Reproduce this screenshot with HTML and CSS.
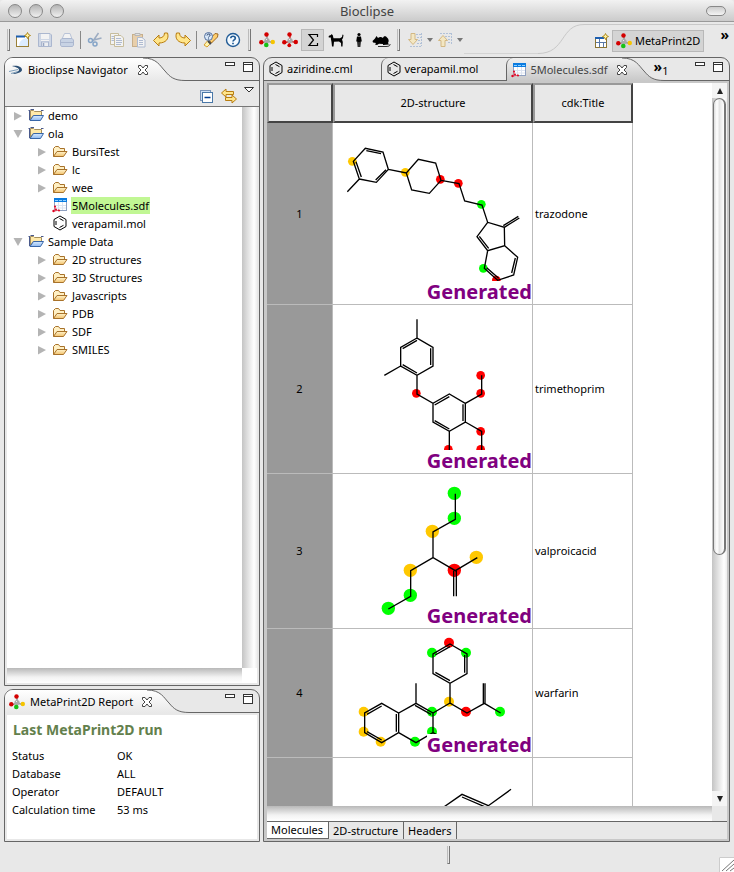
FILE: index.html
```html
<!DOCTYPE html>
<html lang="en">
<head>
<meta charset="utf-8">
<title>Bioclipse</title>
<link rel="stylesheet" href="styles.css">
</head>
<body>
<svg class="defs" aria-hidden="true">
  <defs>
    <linearGradient id="g-light" x1="0" y1="0" x2="0" y2="1"><stop offset="0" stop-color="#fff"/><stop offset="1" stop-color="#e8e8e8"/></linearGradient>
    <linearGradient id="g-dark" x1="0" y1="0" x2="0" y2="1"><stop offset="0" stop-color="#f0f0f0"/><stop offset="1" stop-color="#c8c8c8"/></linearGradient>
    <linearGradient id="g-folder" x1="0" y1="0" x2="0" y2="1"><stop offset="0" stop-color="#fff3cc"/><stop offset="1" stop-color="#f3c26c"/></linearGradient>
    <linearGradient id="g-blue" x1="0" y1="0" x2="0" y2="1"><stop offset="0" stop-color="#d8ebff"/><stop offset="1" stop-color="#8db8f0"/></linearGradient>
    <symbol id="folder" viewBox="0 0 16 16"><path d="M1.500 13.500V5.500L3.500 3.500H6.500L8 5.500H12.500V8" fill="#fff0c4" stroke="#a8722a"/><path d="M1.500 13.500L5 8.500H15L11.500 13.500Z" fill="url(#g-folder)" stroke="#a8722a"/></symbol>
    <symbol id="project" viewBox="0 0 16 16"><path d="M2.500 12.500V3.500H5.500L6.500 4.500H13.500V8.500H5Z" fill="#ffe9a8" stroke="#a58f5c"/><path d="M0.500 3.500H2M2.500 2.500H6M13 3.500H15.500M1.500 4V13" fill="none" stroke="#4a5a8c"/><path d="M2 13.500L5.500 8.500H15.500L12.500 13.500Z" fill="url(#g-blue)" stroke="#3866a8"/></symbol>
    <symbol id="ring" viewBox="0 0 16 16"><path d="M8 1L14 4.500V11.500L8 15L2 11.500V4.500Z M4 6V10M7.500 3.500L11.500 5.700M7.500 12.500L11.500 10.300" fill="none" stroke="#000"/></symbol>
    <symbol id="sdf" viewBox="0 0 16 16"><rect x="2.500" y="2.500" width="12" height="11" fill="#fff" stroke="#8fa0c0"/><path d="M2 1H15V5H2Z" fill="#0a7be0"/><path d="M3 3.500H14" stroke="#8fd0ff" stroke-dasharray="3 1"/><path d="M6.500 5V13M10.500 5V13M3 8.500H14M3 11H14" stroke="#dbe3f0" fill="none"/><path d="M3 9V13.500M1 14H3L7 13" stroke="#e86070" fill="none"/><circle cx="3" cy="9.500" r="1" fill="#e00020"/><circle cx="1.500" cy="14" r="1.200" fill="#e00020"/><circle cx="4" cy="12.500" r="1" fill="#e00020"/><circle cx="7" cy="13.500" r="1" fill="#e00020"/></symbol>
    <symbol id="mol" viewBox="0 0 16 16"><path d="M8 3V9L2.500 11M8 9L13.500 10.500M8 9L7 13" stroke="#999" stroke-width="1.600" fill="none"/><circle cx="7.500" cy="2.500" r="2.200" fill="#d40000"/><circle cx="2.300" cy="10.300" r="2.200" fill="#d40000"/><circle cx="8" cy="8.500" r="2.600" fill="#aaa"/><circle cx="7.300" cy="13" r="2.300" fill="#16c216"/><circle cx="13.800" cy="10" r="2.200" fill="#f5c400"/><path d="M7 8L8 7" stroke="#eee"/></symbol>
    <symbol id="mol-red" viewBox="0 0 16 16"><path d="M8 3V9L2.500 11M8 9L13.500 10.500M8 9L7 13" stroke="#c44" stroke-width="1.600" fill="none"/><circle cx="7.500" cy="2.500" r="2.200" fill="#d40000"/><circle cx="2.300" cy="10.300" r="2.200" fill="#d40000"/><circle cx="8" cy="8.500" r="2.600" fill="#aaa"/><circle cx="7.300" cy="13.300" r="1.900" fill="#d40000"/><circle cx="13.800" cy="10" r="2.200" fill="#d40000"/><path d="M7 8L8 7" stroke="#eee"/></symbol>
    <symbol id="close" viewBox="0 0 12 12"><path d="M1.500 1.500H4L6 4L8 1.500H10.500V3.500L8 6L10.500 8.500V10.500H8L6 8L4 10.500H1.500V8.500L4 6L1.500 3.500Z" fill="#fff" stroke="#444"/></symbol>
    <symbol id="min" viewBox="0 0 11 11"><rect x="0.500" y="0.500" width="9" height="3" fill="#fff" stroke="#333"/></symbol>
    <symbol id="max" viewBox="0 0 11 11"><rect x="0.500" y="0.500" width="9" height="9" fill="#fff" stroke="#333"/><path d="M0 2.500H10" stroke="#333"/></symbol>
    <symbol id="tri-right" viewBox="0 0 10 10"><path d="M1 1L9 5L1 9.500Z" fill="#b4b4b4"/></symbol>
    <symbol id="tri-down" viewBox="0 0 10 10"><path d="M0.500 1H9.500L5 9Z" fill="#b4b4b4"/></symbol>
    <symbol id="caret" viewBox="0 0 8 6"><path d="M1 1H7L4 5Z" fill="#777"/></symbol>
    <symbol id="star" viewBox="0 0 7 7"><path d="M3.500 0.500L4.500 2.500L6.500 3.500L4.500 4.500L3.500 6.500L2.500 4.500L0.500 3.500L2.500 2.500Z" fill="#fff3a0" stroke="#b08a20"/></symbol>
  </defs>
</svg>

<header class="titlebar">
  <span class="lights"><i></i><i></i><i></i></span>
  <h1>Bioclipse</h1>
  <span class="pill"></span>
</header>

<div class="toolbar">
  <span class="handle"></span>
  <button aria-label="New"><svg viewBox="0 0 16 16"><rect x="1.500" y="4.500" width="12" height="10" fill="#dcecff" stroke="#9a8038"/><path d="M2 5V14H4C4 9 8 6 13 6V5Z" fill="#fff"/><path d="M1 4.500H10" stroke="#1d5fb0" stroke-width="2"/><use href="#star" x="9" y="0" width="7" height="7"/></svg></button>
  <button aria-label="Save"><svg class="dim" viewBox="0 0 16 16"><path d="M1.500 1.500H13L14.500 3V14.500H1.500Z" fill="#b8c8e4" stroke="#7088b8"/><rect x="4" y="2" width="8" height="5" fill="#fff"/><path d="M4 8.500H12" stroke="#fff"/><rect x="4.500" y="10" width="7" height="4.500" fill="#f0f4fa" stroke="#7088b8"/><path d="M6.500 11V14" stroke="#4b679d" stroke-width="1.500"/></svg></button>
  <button aria-label="Print"><svg class="dim" viewBox="0 0 16 16"><path d="M5.500 1.500H11L13 7H3Z" fill="#fff" stroke="#8ba0c8"/><path d="M1.500 8L3 6.500H13L14.500 8V13L13.500 14.500H2.500L1.500 13Z" fill="#a9bfe2" stroke="#7088b8"/><path d="M2 10.500H14" stroke="#7088b8"/></svg></button>
  <span class="sep"></span>
  <button aria-label="Cut"><svg class="dim" viewBox="0 0 16 16"><path d="M11.500 1L6 9M14.500 6L5 8.500" stroke="#53719d" stroke-width="1.500"/><circle cx="3.500" cy="8.500" r="2" fill="none" stroke="#2864a8" stroke-width="1.500"/><circle cx="8" cy="12" r="2" fill="none" stroke="#2864a8" stroke-width="1.500"/></svg></button>
  <button aria-label="Copy"><svg class="dim" viewBox="0 0 16 16"><path d="M1.500 1.500H9.500V12.500H1.500Z" fill="#fff" stroke="#a89454"/><path d="M5.500 3.500H12L14.500 6V14.500H5.500Z" fill="#fff" stroke="#a89454"/><path d="M7 6.500H12M7 8.500H13M7 10.500H13M7 12.500H12M2.500 4.500H5M2.500 6.500H5M2.500 8.500H5" stroke="#7890bc"/></svg></button>
  <button aria-label="Paste"><svg class="dim" viewBox="0 0 16 16"><rect x="1.500" y="2.500" width="10" height="12" fill="#e8b870" stroke="#a87830"/><path d="M4 3.500V1.500H9V3.500Z" fill="#ddd" stroke="#888"/><path d="M6.500 5.500H11L14 8V15H6.500Z" fill="#fff" stroke="#7890bc"/><path d="M8 8.500H12M8 10.500H12M8 12.500H12" stroke="#7890bc"/></svg></button>
  <button aria-label="Undo"><svg viewBox="0 0 16 16"><path d="M0.500 8.500L6 3V6C9 6 11.500 4.500 11.500 1H14.500C16.500 7 12.500 11 6 11V14Z" fill="#ffe58a" stroke="#b87d10"/></svg></button>
  <button aria-label="Redo"><svg viewBox="0 0 16 16"><path d="M15.500 8.500L10 3V6C7 6 4.500 4.500 4.500 1H1.500C-0.500 7 3.500 11 10 11V14Z" fill="#ffe58a" stroke="#b87d10"/></svg></button>
  <span class="sep"></span>
  <button aria-label="Search"><svg viewBox="0 0 16 16"><path d="M1 13L7 6L10 9L4 15Z" fill="#fff6b0" stroke="#d8a030"/><path d="M6 8L12 1.500L15 2L14.500 5L8.500 11Z" fill="#ffcf70" stroke="#a06a20"/><path d="M5 9L8 12" stroke="#444" stroke-width="2"/><circle cx="5.500" cy="4.500" r="4" fill="#d8e8fa" stroke="#54709c"/><path d="M4 3.500C4 1.500 7.500 1.500 7 3.500C6.500 4.500 5.500 4.500 5.500 5.500M5.500 6.500V7.500" fill="none" stroke="#223c68"/></svg></button>
  <button aria-label="Help"><svg viewBox="0 0 16 16"><circle cx="8" cy="8" r="6.500" fill="#f4faff" stroke="#225c96" stroke-width="1.400"/><path d="M5.800 6.300C5.800 3.500 10.300 3.600 10.300 6.200C10.300 8 8 7.800 8 9.600M8 10.800V12.300" fill="none" stroke="#225c96" stroke-width="1.700"/></svg></button>
  <span class="handle"></span>
  <button class="wide" aria-label="MetaPrint2D"><svg viewBox="0 0 16 16"><use href="#mol"/></svg></button>
  <button class="wide" aria-label="Reactions"><svg viewBox="0 0 16 16"><use href="#mol-red"/></svg></button>
  <button class="wide pressed" aria-label="Sum"><svg viewBox="0 0 16 16"><path d="M12.500 5V2.500H4L8.500 8L4 13.500H12.500V11" fill="none" stroke="#000" stroke-width="1.200"/></svg></button>
  <button class="wide" aria-label="Dog"><svg viewBox="0 0 16 16"><path d="M0.500 5L1 3.800L3 3L3.500 2L4.800 3.200L5.500 6.200H12L14 5L14.500 2.500L15.500 3L15 6L14 7.500L14.800 10L14.500 14.500H13.200L13 11L11 9.500L6 9.800L5.500 14.500H4L3.500 10L3 7.500L2.800 5.500H1Z"/></svg></button>
  <button class="wide" aria-label="Human"><svg viewBox="0 0 16 16"><circle cx="8" cy="2.500" r="1.600"/><path d="M6 4.500H10L10.800 9.500H9.800L9.300 15H8.200V10H7.800V15H6.700L6.200 9.500H5.200Z"/></svg></button>
  <button class="wide" aria-label="Rat"><svg class="rat" viewBox="0 0 19 16"><path d="M0.500 9L3 6.500L4.500 4L6 6C8 4.500 9.500 5 11 6C11.500 3.500 14 4 15 5.500C17 7 17 9.500 16 11L17 12.500L11 13V12L7 11.800L5 13L3 12.500L4 11L1 10.500Z"/><path d="M6 14.500H14C17 14.500 18.500 13.500 18 12" fill="none" stroke="#333"/></svg></button>
  <span class="handle"></span>
  <button aria-label="Next annotation"><svg class="dim" viewBox="0 0 16 16"><path d="M9 2.500H14M10 5.500H14M11 8.500H14M10 11.500H14M3 14.500H14M14.500 1V14" stroke="#7c9cc8" stroke-dasharray="2 1"/><path d="M4 1.500H8V7.500H10.500L6 12.500L1.500 7.500H4Z" fill="#ffe7a0" stroke="#c08a20"/></svg></button>
  <svg class="caret"><use href="#caret"/></svg>
  <button aria-label="Previous annotation"><svg class="dim" viewBox="0 0 16 16"><path d="M3 1.500H14M8 4.500H14M11 7.500H14M11 10.500H14M14.500 1V12" stroke="#7c9cc8" stroke-dasharray="2 1"/><path d="M4 14.500H8V8.500H10.500L6 3.500L1.500 8.500H4Z" fill="#ffe7a0" stroke="#c08a20"/></svg></button>
  <svg class="caret"><use href="#caret"/></svg>
  <div class="perspectives">
    <svg class="swoosh" viewBox="0 0 46 35"><path d="M0 31.500C28 31.500 22 2.500 46 2.500" fill="none" stroke="#c8c8c8"/></svg>
    <div class="persp-bar">
      <button aria-label="Open perspective"><svg viewBox="0 0 16 16"><rect x="2.500" y="4.500" width="11" height="10" fill="#fff" stroke="#8a7434"/><path d="M2 5H11" stroke="#1d5fb0" stroke-width="2"/><path d="M6.500 6V14M3 9.500H13M10.500 10V14" stroke="#5878a8"/><use href="#star" x="9" y="0" width="7" height="7"/></svg></button>
      <button class="persp"><svg viewBox="0 0 16 16"><use href="#mol"/></svg>MetaPrint2D</button>
      <span class="more">»</span>
    </div>
  </div>
</div>

<main class="workbench">
  <div class="side">
    <section class="panel navigator">
      <div class="head">
        <div class="tab active"><svg class="icon" viewBox="0 0 16 16"><path d="M4 4C10 3 14 5 14 8C14 10 9 12 4 12C8 11 11 9 11 8C11 6 8 5 4 4Z" fill="#2c4f74"/><path d="M1 9.500L10 7.500M3 11.500L10 9.500" stroke="#7fa0bc"/></svg><h2>Bioclipse Navigator</h2><button class="x" aria-label="Close"><svg><use href="#close"/></svg></button></div>
        <svg class="curve" viewBox="0 0 42 23"><path d="M0 0C14 0 17 8 22 13C27 19 31 22.500 42 22.500V23H0Z" fill="url(#g-light)"/><path d="M0 0C14 0 17 8 22 13C27 19 31 22.500 42 22.500" fill="none" stroke="#666"/></svg>
        <div class="rest"><button aria-label="Minimize"><svg><use href="#min"/></svg></button><button aria-label="Maximize"><svg><use href="#max"/></svg></button></div>
      </div>
      <div class="viewbar">
        <button aria-label="Collapse all"><svg viewBox="0 0 16 16"><rect x="2.500" y="2.500" width="10" height="10" fill="#cfe0f4" stroke="#7a94b8"/><rect x="4.500" y="4.500" width="10" height="10" fill="#fff" stroke="#4a78a8"/><path d="M6.500 9.500H12.500" stroke="#003c90" stroke-width="1.500"/></svg></button>
        <button aria-label="Link with editor"><svg viewBox="0 0 16 16"><path d="M0.500 5L5 1V3.500H12.500V6.500H5V9Z M15.500 11L11 7V9.500H4.500V12.500H11V15Z" fill="#ffe58a" stroke="#b87d10"/></svg></button>
        <button class="menu" aria-label="View menu"><svg viewBox="0 0 10 6"><path d="M0.500 0.500H9.500L5 5Z" fill="#fff" stroke="#333"/></svg></button>
      </div>
      <div class="scrollpane">
        <ul class="tree">
          <li><svg class="tw"><use href="#tri-right"/></svg><svg class="icon"><use href="#project"/></svg><span>demo</span></li>
          <li><svg class="tw"><use href="#tri-down"/></svg><svg class="icon"><use href="#project"/></svg><span>ola</span></li>
          <li class="child"><svg class="tw"><use href="#tri-right"/></svg><svg class="icon"><use href="#folder"/></svg><span>BursiTest</span></li>
          <li class="child"><svg class="tw"><use href="#tri-right"/></svg><svg class="icon"><use href="#folder"/></svg><span>lc</span></li>
          <li class="child"><svg class="tw"><use href="#tri-right"/></svg><svg class="icon"><use href="#folder"/></svg><span>wee</span></li>
          <li class="child"><svg class="tw"></svg><svg class="icon"><use href="#sdf"/></svg><span class="selected">5Molecules.sdf</span></li>
          <li class="child"><svg class="tw"></svg><svg class="icon"><use href="#ring"/></svg><span>verapamil.mol</span></li>
          <li><svg class="tw"><use href="#tri-down"/></svg><svg class="icon"><use href="#project"/></svg><span>Sample Data</span></li>
          <li class="child"><svg class="tw"><use href="#tri-right"/></svg><svg class="icon"><use href="#folder"/></svg><span>2D structures</span></li>
          <li class="child"><svg class="tw"><use href="#tri-right"/></svg><svg class="icon"><use href="#folder"/></svg><span>3D Structures</span></li>
          <li class="child"><svg class="tw"><use href="#tri-right"/></svg><svg class="icon"><use href="#folder"/></svg><span>Javascripts</span></li>
          <li class="child"><svg class="tw"><use href="#tri-right"/></svg><svg class="icon"><use href="#folder"/></svg><span>PDB</span></li>
          <li class="child"><svg class="tw"><use href="#tri-right"/></svg><svg class="icon"><use href="#folder"/></svg><span>SDF</span></li>
          <li class="child"><svg class="tw"><use href="#tri-right"/></svg><svg class="icon"><use href="#folder"/></svg><span>SMILES</span></li>
        </ul>
        <div class="vbar"></div>
        <div class="hbar"></div>
      </div>
    </section>

    <section class="panel report">
      <div class="head">
        <div class="tab active"><svg class="icon"><use href="#mol"/></svg><h2>MetaPrint2D Report</h2><button class="x" aria-label="Close"><svg><use href="#close"/></svg></button></div>
        <svg class="curve" viewBox="0 0 42 23"><path d="M0 0C14 0 17 8 22 13C27 19 31 22.500 42 22.500V23H0Z" fill="url(#g-light)"/><path d="M0 0C14 0 17 8 22 13C27 19 31 22.500 42 22.500" fill="none" stroke="#666"/></svg>
        <div class="rest"><button aria-label="Minimize"><svg><use href="#min"/></svg></button><button aria-label="Maximize"><svg><use href="#max"/></svg></button></div>
      </div>
      <div class="report-body">
        <h3>Last MetaPrint2D run</h3>
        <table>
          <tr><th scope="row">Status</th><td>OK</td></tr>
          <tr><th scope="row">Database</th><td>ALL</td></tr>
          <tr><th scope="row">Operator</th><td>DEFAULT</td></tr>
          <tr><th scope="row">Calculation time</th><td>53 ms</td></tr>
        </table>
      </div>
    </section>
  </div>

  <section class="panel editor">
    <div class="head">
      <div class="tab"><svg class="icon"><use href="#ring"/></svg><h2>aziridine.cml</h2></div>
      <div class="tab next"><svg class="icon"><use href="#ring"/></svg><h2>verapamil.mol</h2></div>
      <div class="tab active next"><svg class="icon"><use href="#sdf"/></svg><h2>5Molecules.sdf</h2><button class="x" aria-label="Close"><svg><use href="#close"/></svg></button></div>
      <svg class="curve" viewBox="0 0 42 23"><path d="M0 0C14 0 17 8 22 13C27 19 31 22.500 42 22.500V23H0Z" fill="url(#g-dark)"/><path d="M0 0C14 0 17 8 22 13C27 19 31 22.500 42 22.500" fill="none" stroke="#666"/></svg>
      <div class="rest"><span class="overflow"><b>»</b>1</span><button aria-label="Minimize"><svg><use href="#min"/></svg></button><button aria-label="Maximize"><svg><use href="#max"/></svg></button></div>
    </div>
    <div class="frame">
      <div class="sheet">
        <div class="sheet-view">
          <table class="molecules">
            <thead><tr><th class="c-num"></th><th class="c-mol">2D-structure</th><th class="c-title">cdk:Title</th></tr></thead>
            <tbody>
              <tr><th scope="row">1</th><td class="mol"><svg class="r1" viewBox="9 -21 597 543"><g class="y"><circle cx="67" cy="94" r="13"/><circle cx="226" cy="127" r="13"/></g><g class="r"><circle cx="331" cy="148" r="13"/><circle cx="385" cy="160" r="13"/><circle cx="499" cy="450" r="13"/></g><g class="g"><circle cx="454" cy="223" r="13"/><circle cx="460" cy="415" r="13"/></g><path d="M52 185L88 147L70 94L106 55L159 66L175 118L139 157L88 147M94 141L78 95M109 62L153 71M168 119L137 150M175 118L229 129L265 88L317 99L333 151L298 190L245 180L229 129M333 151L387 161L404 213L456 225L473 277L523 292L524 347L473 362L441 320L473 277M523 292L568 264M520 287L565 259M448 319L476 355M524 347L563 382L551 435L503 451L463 415L473 362M556 384L545 429M470 413L506 445"/></svg><strong>Generated</strong></td><td>trazodone</td></tr>
              <tr><th scope="row">2</th><td class="mol"><svg class="r2" viewBox="9 15 597 504"><g class="r"><circle cx="259" cy="280" r="13"/><circle cx="452" cy="226" r="13"/><circle cx="452" cy="280" r="13"/><circle cx="452" cy="394" r="13"/><circle cx="452" cy="448" r="13"/><circle cx="355" cy="448" r="13"/></g><path d="M261 58V114L309 142V198L261 226L212 198V142L261 114M163 226L212 198M261 121L218 146M302 145V195M261 219L218 194M261 226V282L309 310L358 282L406 310V366L358 394L309 366V310M314 315L358 290M399 313V363M358 387L314 362M406 310L455 282V226M406 366L455 394V450M358 394V450"/></svg><strong>Generated</strong></td><td>trimethoprim</td></tr>
              <tr><th scope="row">3</th><td class="mol"><svg class="r3" viewBox="9 -3 597 462"><g class="g"><circle cx="373" cy="55" r="20"/><circle cx="373" cy="130" r="20"/><circle cx="241" cy="361" r="20"/><circle cx="175" cy="400" r="20"/></g><g class="y"><circle cx="307" cy="169" r="20"/><circle cx="439" cy="247" r="20"/><circle cx="241" cy="286" r="20"/></g><g class="r"><circle cx="373" cy="286" r="20"/></g><path d="M376 56V133L309 171V248L376 287L442 248M371 287V364M379 287V364M309 248L242 287V364L175 402"/></svg><strong>Generated</strong></td><td>valproicacid</td></tr>
              <tr><th scope="row">4</th><td class="mol"><svg class="r4" viewBox="9 12 597 384"><g class="g"><circle cx="306" cy="83" r="15"/><circle cx="408" cy="83" r="15"/><circle cx="306" cy="260" r="15"/><circle cx="306" cy="320" r="15"/><circle cx="255" cy="350" r="15"/><circle cx="510" cy="260" r="15"/></g><g class="y"><circle cx="357" cy="230" r="15"/><circle cx="101" cy="260" r="15"/><circle cx="101" cy="320" r="15"/><circle cx="152" cy="350" r="15"/></g><g class="r"><circle cx="357" cy="53" r="15"/><circle cx="408" cy="260" r="15"/></g><path d="M360 57L411 87V146L360 175L309 146V87ZM360 65L316 90M404 90V143M360 167L316 142M360 175V234L411 264L463 235L512 264M460 235V175M465 235V175M360 234L309 264L258 235L206 264L155 235L104 264V323L155 353L206 323V264M258 235V175M309 264V323L258 353L206 323M303 268L255 241M309 323L330 335M155 243L111 268M199 267V320M155 345L111 320"/></svg><strong>Generated</strong></td><td>warfarin</td></tr>
              <tr><th scope="row"></th><td class="mol"><svg class="r5" viewBox="9 399 597 288"><path d="M340 547L396 508L475 542L543 493M396 516L480 552"/></svg></td><td></td></tr>
            </tbody>
          </table>
        </div>
        <div class="vscroll"><span class="arrow"><svg viewBox="0 0 8 8"><path d="M1 7H7L4 1Z"/></svg></span><div class="track"><div class="thumb"></div></div><span class="arrow"><svg viewBox="0 0 8 8"><path d="M1 1H7L4 7Z"/></svg></span></div>
        <div class="hbar"></div>
      </div>
      <nav class="pages"><button class="on">Molecules</button><button>2D-structure</button><button>Headers</button></nav>
    </div>
  </section>
</main>

<footer class="status"><span class="handle"></span><svg class="grip" viewBox="0 0 15 15"><rect width="15" height="15" fill="#fff"/><path d="M0.500 15V0.500H15" fill="none" stroke="#ccc"/><path d="M3 14L15 3M7 14L15 7M11 14L15 11" stroke="#777"/></svg></footer>
</body>
</html>
```

FILE: styles.css
```css
* { box-sizing: border-box; }
body {
  margin: 0;
  height: 100vh;
  display: flex;
  flex-direction: column;
  background: #e8e8e8;
  color: #000;
  font: 11px/18px "Lucida Grande", "Noto Sans", sans-serif;
}
h1, h2, h3, ul, table { margin: 0; padding: 0; font-size: 11px; font-weight: normal; }
button { margin: 0; padding: 0; border: 0; background: none; font: inherit; color: inherit; }
svg { display: block; flex: none; }
.defs { position: absolute; width: 0; height: 0; }
.icon { width: 16px; height: 16px; }
.dim { opacity: 0.5; }

.titlebar {
  display: grid;
  grid-template-columns: 1fr auto 1fr;
  align-items: center;
  height: 22px;
  padding: 0 8px;
  border-bottom: 1px solid #999;
  border-radius: 4px 4px 0 0;
  background: linear-gradient(#f2f2f2, #cbcbcb);
}
.titlebar h1 { font-size: 13px; color: #444; }
.lights { display: flex; gap: 7px; }
.lights i {
  width: 14px;
  height: 14px;
  border: 1px solid #888;
  border-radius: 50%;
  background: linear-gradient(#b4b4b4, #f0f0f0);
}
.pill {
  justify-self: end;
  width: 20px;
  height: 10px;
  border: 1px solid #888;
  border-radius: 5px;
  background: linear-gradient(#ccc, #f4f4f4);
}

.toolbar {
  display: flex;
  align-items: center;
  flex: none;
  height: 35px;
  padding-left: 7px;
}
.toolbar button { display: flex; align-items: center; justify-content: center; width: 22px; height: 22px; flex: none; }
.toolbar button.wide { width: 23px; }
.toolbar svg { width: 16px; height: 16px; }
.toolbar svg.rat { width: 19px; }
.toolbar svg.caret { width: 8px; height: 6px; }
.toolbar .pressed { border: 1px solid #b8b8b8; background: #d4d4d4; }
.handle { flex: none; width: 3px; height: 22px; border: 1px solid #777; border-left-color: #bbb; border-top: 0; margin: 0 4px; }
.handle:first-child { margin: 0 2px 0 0; }
.sep { flex: none; width: 1px; height: 18px; margin: 0 3px 0 2px; background: #888; }
.perspectives { display: flex; flex: 1; justify-content: flex-end; align-items: center; height: 35px; }
.perspectives::before {
  content: "";
  flex: 1;
  align-self: flex-end;
  margin-bottom: 3px;
  border-bottom: 1px solid #d4d4d4;
}
.toolbar svg.swoosh { width: 46px; height: 35px; }
.persp-bar {
  display: flex;
  align-items: center;
  align-self: flex-end;
  height: 33px;
  padding-left: 6px;
  padding-right: 5px;
  border-top: 1px solid #c8c8c8;
}
.toolbar .persp {
  width: auto;
  padding: 0 3px;
  gap: 3px;
  border: 1px solid #b8b8b8;
  background: #d4d4d4;
}
.more { align-self: flex-start; margin: 3px 0 0 16px; font-size: 14px; font-weight: bold; line-height: 14px; }

.workbench {
  flex: 1;
  min-height: 0;
  display: grid;
  grid-template-columns: 256px minmax(0, 1fr);
  gap: 3px;
  padding: 0 4px;
}
.side { display: flex; flex-direction: column; gap: 3px; min-height: 0; }
.panel {
  display: flex;
  flex-direction: column;
  min-height: 0;
  border: 1px solid #666;
  border-radius: 9px 9px 0 0;
  overflow: hidden;
}
.navigator { flex: 1; }
.head { display: flex; flex: none; height: 23px; }
.tab { display: flex; align-items: center; gap: 3px; padding-left: 4px; padding-right: 28px; border-bottom: 1px solid #666; white-space: nowrap; }
.tab.next { border-left: 1px solid #666; border-radius: 7px 0 0 0; }
.tab.active { padding-right: 0; border-bottom: 0; background: linear-gradient(#fff, #e8e8e8); }
.report .tab { gap: 5px; }
.navigator .tab { gap: 4px; }
.navigator .tab .icon { margin-left: -1px; }
.x { position: relative; z-index: 1; width: 12px; height: 12px; margin-left: 5px; }
.report .x { margin-left: 3px; }
.x svg { width: 12px; height: 12px; }
.curve { width: 42px; height: 23px; margin-left: -6px; }
.rest { flex: 1; display: flex; justify-content: flex-end; gap: 7px; padding: 4px 5px 0 0; border-bottom: 1px solid #666; }
.rest button, .rest button svg { width: 11px; height: 11px; }
.viewbar { display: flex; justify-content: flex-end; gap: 7px; flex: none; height: 26px; padding: 4px 5px 0; border-bottom: 1px solid #777; }
.viewbar svg { width: 16px; height: 16px; }
.viewbar .menu { height: 6px; margin-top: 2px; }
.viewbar .menu svg { width: 10px; height: 6px; }
.scrollpane {
  flex: 1;
  min-height: 0;
  display: grid;
  grid-template: minmax(0, 1fr) 15px / minmax(0, 1fr) 15px;
  margin: 0 2px 2px;
  background: #fff;
}
.vbar { background: linear-gradient(90deg, #c4c4c4, #fff 80%, #eee); }
.hbar { background: linear-gradient(#b8b8b8, #f2f2f2 60%, #fff); }
.tree { list-style: none; padding-left: 6px; }
.tree li { display: flex; align-items: flex-start; height: 18px; }
.tree .child { padding-left: 24px; }
.tw { width: 10px; height: 10px; margin: 4px 5px 0 0; }
.tree span { margin-left: 3px; padding: 0 1px; line-height: 17px; }
.tree .selected { background: #c1f794; }

.report { flex: none; }
.report-body { margin: 2px; padding: 5px 5px 20px; background: #fff; }
.report h3 { padding-left: 1px; font-size: 14px; line-height: 20px; font-weight: bold; color: #63804c; margin-bottom: 7px; }
.report table { border-collapse: collapse; }
.report th { width: 105px; padding: 0; text-align: left; font-weight: normal; }
.report td { padding: 0; }

.editor .tab.active { background: linear-gradient(#f0f0f0, #c8c8c8); color: #444; }
.overflow { margin-right: auto; margin-left: -10px; }
.overflow b { font-size: 14px; line-height: 10px; vertical-align: 3px; }
.frame {
  flex: 1;
  min-height: 0;
  display: flex;
  flex-direction: column;
  padding: 2px 2px 2px 3px;
  background: #c8c8c8;
}
.sheet {
  flex: 1;
  min-height: 0;
  display: grid;
  grid-template: minmax(0, 1fr) 15px / minmax(0, 1fr) 15px;
  background: #e8e8e8;
}
.sheet-view { overflow: hidden; background: #fff; }
.molecules { table-layout: fixed; width: 366px; border-collapse: separate; border-spacing: 0; }
.molecules th, .molecules td { padding: 0; font-weight: normal; }
.molecules thead th { height: 40px; border: 2px solid #999; border-right-color: #444; border-bottom-color: #444; background: #e8e8e8; }
.c-num { width: 66px; }
.c-mol { width: 200px; }
.c-title { width: 100px; }
.molecules tbody th, .molecules td { border-right: 1px solid #bbb; border-bottom: 1px solid #bbb; }
.molecules tbody th { background: #999; }
.molecules td:last-child { padding-left: 2px; }
.mol { position: relative; }
.mol svg { width: 100%; }
.mol path { fill: none; stroke: #000; stroke-width: 4; }
.mol strong {
  position: absolute;
  right: 0;
  bottom: 0;
  height: 23px;
  background: #fff;
  color: #800080;
  font-size: 20px;
  line-height: 22px;
}
.r1 { height: 181px; }
.r2 { height: 168px; }
.r3 { height: 154px; }
.r4 { height: 128px; }
.r5 { height: 96px; }
.r { fill: #f00; }
.g { fill: #0f0; }
.y { fill: #ffc800; }

.vscroll { display: flex; flex-direction: column; background: linear-gradient(90deg, #c4c4c4, #fff 80%, #eee); }
.arrow { display: flex; align-items: center; justify-content: center; height: 15px; background: #f4f4f4; }
.arrow svg { width: 8px; height: 8px; fill: #222; }
.track { flex: 1; min-height: 0; }
.thumb {
  height: 66%;
  margin: 0 1px;
  border: 1px solid #777;
  border-right-width: 2px;
  border-radius: 7px;
  background: linear-gradient(90deg, #ddd, #fff 30%, #e4e4e4 55%, #fff);
}
.pages { display: flex; flex: none; height: 18px; border-top: 1px solid #666; background: #e8e8e8; }
.pages button { padding: 0 5px 0 4px; border-right: 1px solid #666; line-height: 16px; }
.pages .on { border-bottom: 1px solid #666; background: #fff; }

.status { display: flex; justify-content: space-between; flex: none; height: 30px; padding-left: 447px; }
.status .handle { height: 18px; margin-top: 4px; }
.grip { align-self: flex-end; width: 15px; height: 15px; }
```
